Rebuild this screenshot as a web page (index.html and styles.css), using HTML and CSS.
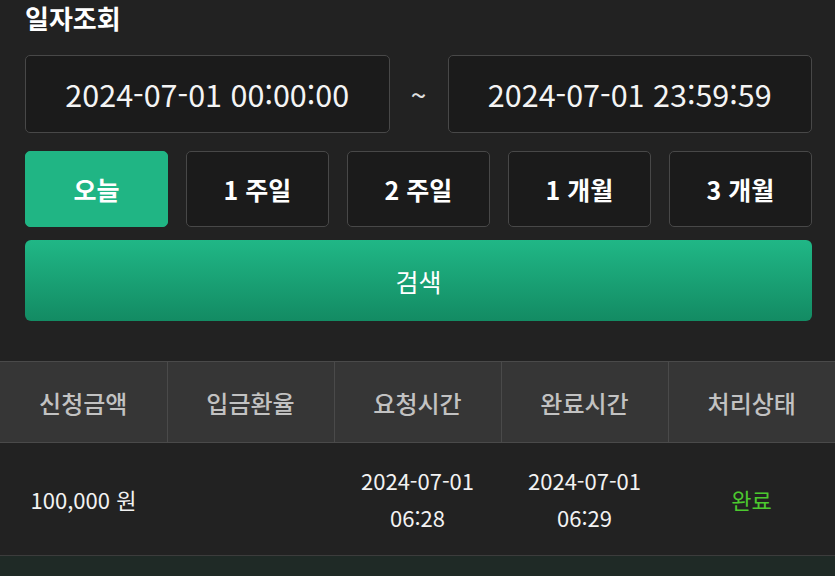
FILE: index.html
```html
<!DOCTYPE html>
<html lang="ko">
<head>
<meta charset="utf-8">
<title>일자조회</title>
<link rel="stylesheet" href="styles.css">
</head>
<body>
<div class="panel">
  <h2 class="title">일자조회</h2>
  <div class="date-row">
    <div class="date-box">2024-07-01 00:00:00</div>
    <div class="tilde">~</div>
    <div class="date-box">2024-07-01 23:59:59</div>
  </div>
  <div class="period-row">
    <button class="period active">오늘</button>
    <button class="period">1 주일</button>
    <button class="period">2 주일</button>
    <button class="period">1 개월</button>
    <button class="period">3 개월</button>
  </div>
  <button class="search">검색</button>
</div>
<table class="list">
  <thead>
    <tr>
      <th>신청금액</th>
      <th>입금환율</th>
      <th>요청시간</th>
      <th>완료시간</th>
      <th>처리상태</th>
    </tr>
  </thead>
  <tbody>
    <tr>
      <td>100,000 원</td>
      <td></td>
      <td>2024-07-01<br>06:28</td>
      <td>2024-07-01<br>06:29</td>
      <td class="done">완료</td>
    </tr>
  </tbody>
</table>
<div class="footer-strip"></div>
</body>
</html>
```
FILE: styles.css
```css
html, body {
  margin: 0;
  padding: 0;
  background: #222222;
  font-family: "Noto Sans CJK KR", "Noto Sans", sans-serif;
  color: #ffffff;
}
body {
  width: 835px;
  height: 576px;
  overflow: hidden;
}
.panel {
  padding: 0 23px 0 25px;
}
.title {
  margin: 0;
  font-size: 26px;
  font-weight: 700;
  line-height: 36px;
  height: 55px;
}
.date-row {
  display: flex;
  align-items: center;
  height: 78px;
}
.date-box {
  flex: 1;
  height: 100%;
  box-sizing: border-box;
  border: 1px solid #484848;
  border-radius: 5px;
  background: #1b1b1b;
  display: flex;
  align-items: center;
  justify-content: center;
  font-size: 30.5px;
  color: #f4f4f4;
}
.tilde {
  width: 58px;
  text-align: center;
  font-size: 28px;
  line-height: 1;
  color: #e0e0e0;
}
.period-row {
  display: flex;
  gap: 18px;
  margin-top: 18px;
  height: 76px;
}
.period {
  flex: 1;
  box-sizing: border-box;
  border: 1px solid #484848;
  border-radius: 5px;
  background: #1b1b1b;
  color: #ffffff;
  font-family: inherit;
  font-size: 25px;
  font-weight: 700;
  padding: 0;
}
.period.active {
  background: #20b584;
  border-color: #20b584;
}
.search {
  display: block;
  width: 100%;
  margin-top: 13px;
  height: 81px;
  border: none;
  border-radius: 6px;
  background: linear-gradient(to bottom, #20b786, #138b63);
  color: #ffffff;
  font-family: inherit;
  font-size: 25px;
  font-weight: 400;
  padding: 0;
}
.list {
  margin-top: 40px;
  width: 835px;
  border-collapse: collapse;
  table-layout: fixed;
}
.list th {
  height: 81px;
  box-sizing: border-box;
  background: #363636;
  border-top: 1px solid #4a4a4a;
  border-bottom: 1px solid #4a4a4a;
  border-left: 1px solid #4a4a4a;
  color: #c2c2c2;
  font-size: 24px;
  font-weight: 500;
  padding: 0;
}
.list th:first-child {
  border-left: none;
}
.list td {
  height: 113px;
  box-sizing: border-box;
  text-align: center;
  font-size: 22px;
  line-height: 37px;
  color: #f2f2f2;
  padding: 0;
  border-bottom: 1px solid #3c3c3c;
}
.list td.done {
  color: #4cc92f;
}
.footer-strip {
  height: 30px;
  background: #1f2a26;
}
```
